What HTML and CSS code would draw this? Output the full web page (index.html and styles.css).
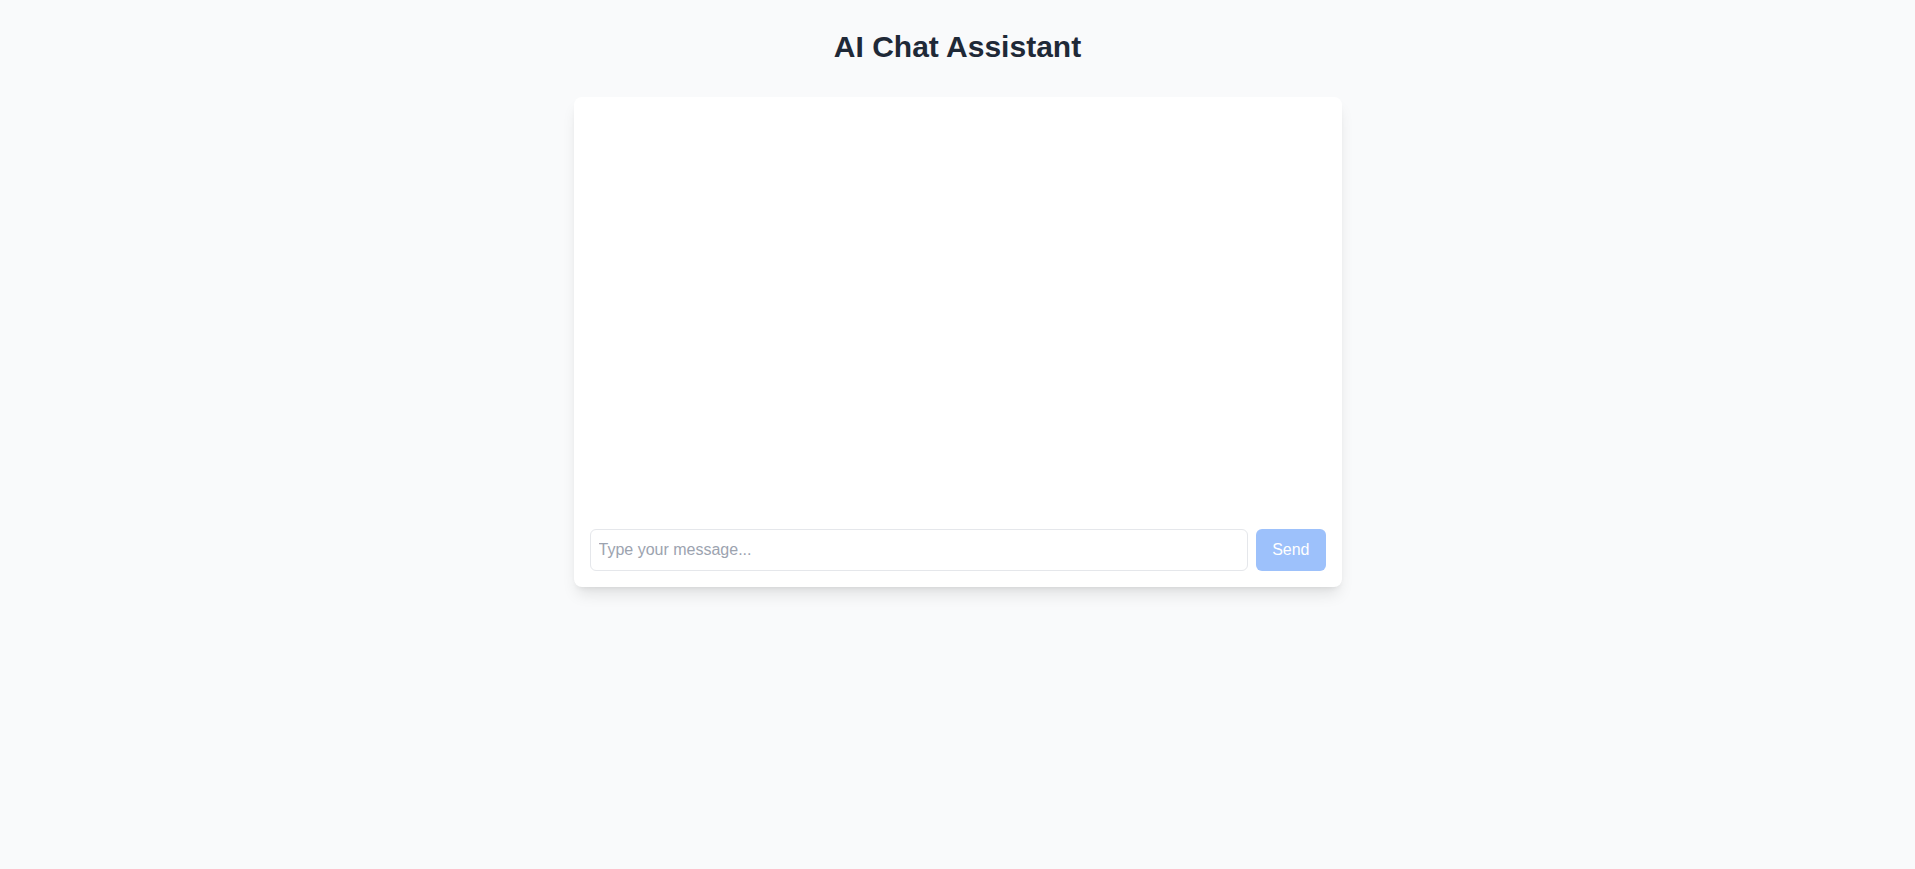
FILE: index.html
```html
<!DOCTYPE html>
<html lang="en">
<head>
<meta charset="utf-8">
<title>AI Chat Assistant</title>
<link rel="stylesheet" href="styles.css">
</head>
<body>
<div class="page">
  <h1 class="title">AI Chat Assistant</h1>
  <div class="card">
    <div class="messages"></div>
    <form class="composer">
      <input class="input" type="text" placeholder="Type your message...">
      <button class="send" type="button">Send</button>
    </form>
  </div>
</div>
</body>
</html>
```
FILE: styles.css
```css
* { box-sizing: border-box; }
html, body {
  margin: 0;
  padding: 0;
  background: #f9fafb;
  font-family: "Liberation Sans", Arial, sans-serif;
  min-height: 100vh;
}
.page {
  display: flex;
  flex-direction: column;
  align-items: center;
  padding-top: 29px;
}
.title {
  margin: 0 0 32px;
  font-size: 30px;
  line-height: 36px;
  font-weight: 700;
  color: #1f2937;
}
.card {
  width: 768px;
  background: #ffffff;
  border-radius: 8px;
  box-shadow: 0 10px 15px -3px rgba(0,0,0,0.1), 0 4px 6px -4px rgba(0,0,0,0.1);
  display: flex;
  flex-direction: column;
}
.messages {
  height: 416px;
  padding: 16px;
}
.composer {
  display: flex;
  gap: 8px;
  padding: 16px;
  margin: 0;
}
.input {
  flex: 1;
  height: 42px;
  padding: 8px;
  border: 1px solid #e5e7eb;
  border-radius: 6px;
  font-family: inherit;
  font-size: 16px;
  color: #111827;
  outline: none;
}
.input::placeholder { color: #9ca3af; }
.send {
  height: 42px;
  padding: 0 16px;
  border: none;
  border-radius: 6px;
  background: #9dc1fb;
  color: #ffffff;
  font-family: inherit;
  font-size: 16px;
  cursor: not-allowed;
}
```
